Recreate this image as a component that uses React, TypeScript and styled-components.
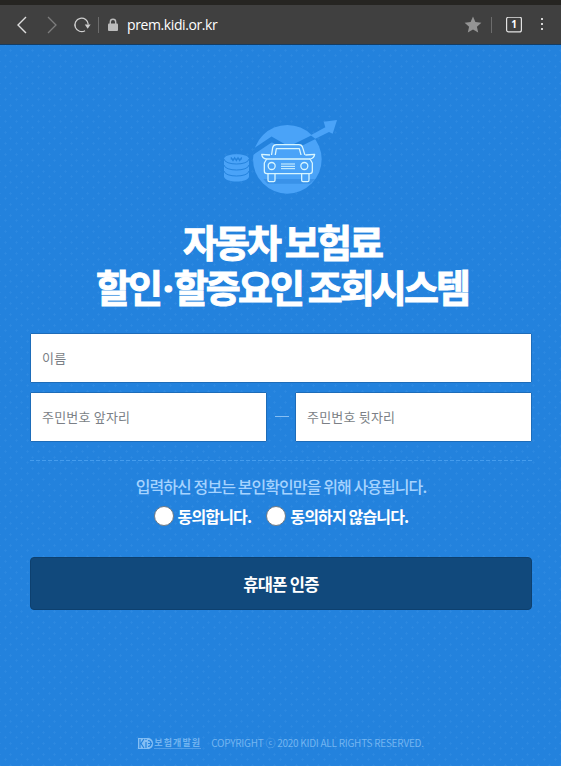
import React from "react";
import styled, { createGlobalStyle } from "styled-components";

const GlobalStyle = createGlobalStyle`
  * { box-sizing: border-box; }
  body { margin: 0; background: #2382dd; }
  input, button { font-family: inherit; }
`;

const Page = styled.div`
  height: 766px;
  display: flex;
  flex-direction: column;
  overflow: hidden;
  font-family: "Noto Sans CJK KR", "Noto Sans", sans-serif;
`;

const BrowserBar = styled.header`
  height: 45px;
  flex: none;
  display: flex;
  align-items: center;
  border-top: 5px solid #262522;
  border-bottom: 1px solid #143c63;
  background: #404040;
  padding: 0 16px 0 12px;
`;

const ToolIcon = styled.svg<{ $left?: number }>`
  display: block;
  flex: none;
  margin-left: ${(p) => p.$left ?? 0}px;
`;

const Separator = styled.span<{ $left: number }>`
  width: 1px;
  height: 16px;
  margin-left: ${(p) => p.$left}px;
  background: #6c6c6c;
`;

const Address = styled.span`
  flex: 1;
  margin-left: 9px;
  color: #fff;
  font: 14px/20px "Open Sans", "Noto Sans", sans-serif;
  letter-spacing: -0.4px;
`;

const Main = styled.main`
  flex: 1;
  display: flex;
  flex-direction: column;
  align-items: center;
  padding: 60px 29px 0 30px;
  background-color: #2382dd;
  background-image:
    radial-gradient(circle at 5.5px 5.5px, #2d89e0 0.8px, transparent 1.4px),
    radial-gradient(circle at 5.5px 5.5px, #2d89e0 0.8px, transparent 1.4px);
  background-size: 11px 11px;
  background-position: 5px 0, 0 5px;
`;

const Hero = styled.svg`
  display: block;
  flex: none;
  width: 140px;
  height: 100px;
  margin-right: 2px;
`;

const Title = styled.h1`
  margin: 13px 0 0;
  padding-left: 2px;
  color: #fff;
  font-size: 38px;
  font-weight: 700;
  line-height: 45px;
  text-align: center;
  white-space: nowrap;
  letter-spacing: -2.9px;
  -webkit-text-stroke: 1px #fff;
`;

const TitleLine = styled.span`
  display: block;
`;

const MiddleDot = styled.span`
  margin-left: 3px;
  font-family: "Noto Sans", sans-serif;
  line-height: 0;
  letter-spacing: 0;
`;

const Form = styled.form`
  align-self: stretch;
  margin-top: 25px;
`;

const Field = styled.input`
  display: block;
  width: 100%;
  min-width: 0;
  height: 50px;
  border: 1px solid #1d6cb9;
  border-radius: 1px;
  background: #fff;
  padding: 0 10px 2px 11px;
  font-size: 13px;
  letter-spacing: 0.2px;
  &::placeholder { color: #7b7f86; opacity: 1; }
`;

const IdRow = styled.div`
  display: grid;
  grid-template-columns: 1fr 14px 1fr;
  column-gap: 7px;
  align-items: center;
  margin-top: 9px;
`;

const Dash = styled.span`
  height: 1px;
  margin: 0 -1px 2px 1px;
  background: #86bff4;
`;

const Consent = styled.section`
  margin-top: 18px;
  text-align: center;
`;

const Rule = styled.svg`
  display: block;
  width: 100%;
  height: 1px;
`;

const Notice = styled.p`
  margin: 13px 0 0;
  color: #a5d3ff;
  font-size: 16px;
  font-weight: 500;
  line-height: 24px;
  letter-spacing: -0.92px;
`;

const Choices = styled.div`
  display: flex;
  justify-content: center;
  gap: 15px;
  margin-top: 6px;
`;

const Choice = styled.label`
  display: flex;
  align-items: center;
  gap: 4px;
  height: 24px;
  color: #fff;
  font-size: 16px;
  font-weight: 700;
  letter-spacing: -0.85px;
`;

const Radio = styled.input`
  appearance: none;
  width: 20px;
  height: 20px;
  margin: 0;
  border: 1px solid #727b84;
  border-radius: 50%;
  background: #fff;
`;

const Submit = styled.button`
  display: block;
  width: 100%;
  height: 53px;
  margin-top: 29px;
  padding-bottom: 1px;
  border: 1px solid #0d406f;
  border-radius: 4px;
  background: #11497c;
  color: #fff;
  font-size: 16.5px;
  font-weight: 700;
  letter-spacing: -0.7px;
`;

const Footer = styled.footer`
  display: flex;
  align-items: center;
  gap: 10px;
  height: 16px;
  margin: auto 0 15px;
  color: #73b5f1;
`;

const Brand = styled.div`
  display: flex;
  align-items: center;
  gap: 1px;
`;

const BrandText = styled.div`
  display: flex;
  flex-direction: column;
`;

const BrandName = styled.span`
  font-size: 9px;
  line-height: 9px;
  font-weight: 700;
  letter-spacing: 1.1px;
  white-space: nowrap;
`;

const BrandRule = styled.span`
  height: 1px;
  margin-top: 1px;
  background: #529fe9;
`;

const Copyright = styled.span`
  font-size: 10px;
  line-height: 16px;
  letter-spacing: -0.25px;
  white-space: nowrap;
`;

function HeroArt() {
  const light = "#4aa3f8";
  const base = "#2382dd";
  return (
    <Hero viewBox="0 0 420 300" aria-hidden="true">
      <defs>
        <clipPath id="disc"><circle cx="232" cy="163" r="104" /></clipPath>
      </defs>
      <circle cx="232" cy="163" r="103" fill={light} />
      <g clipPath="url(#disc)">
        <path d="M120 147 185 103 237 133 325 89" fill="none" stroke={base} strokeWidth="15" />
        <path d="M160 222H316L300 236H172Z" fill="#3992e9" />
      </g>
      <path d="M302 91 316 101 357 81 368 86 381 45 341 50 346 67Z" fill={light} />
      <path d="M42 162v52c0 21 75 21 75 0v-52c0-19-75-19-75 0Z" fill={light} />
      <path d="M42 162c2 20 73 20 75 0M42 180c2 20 73 20 75 0M42 198c2 20 73 20 75 0" fill="none" stroke={base} strokeWidth="3" />
      <path d="M63 157l6 10 5-9 5 9 5-9 5 9 6-10M62 162h34" fill="none" stroke={base} strokeWidth="3.5" />
      <g fill={light} stroke="#d8f6ff" strokeWidth="3.8" strokeLinejoin="round">
        <path d="M174 202v24q0 4 4 4h13q4 0 4-4v-20M275 206v20q0 4 4 4h14q4 0 4-4v-24" />
        <path d="M183 161 188 128Q190 119 199 119H267Q276 119 278 128L288 161" />
        <path d="M194 161 199 131H268L276 161" fill="none" />
        <path d="M180 150 155 148Q157 161 170 162L163 174V198Q163 206 171 206H299Q307 206 307 198V174L300 162Q312 160 314 148L286 150" />
        <path d="M170 162H300" fill="none" />
        <circle cx="185" cy="183" r="10.5" />
        <circle cx="283" cy="183" r="10.5" />
        <path d="M213 177H255M213 184H255M213 191H255" strokeWidth="3" />
      </g>
    </Hero>
  );
}

export default function App() {
  return (
    <Page>
      <GlobalStyle />
      <BrowserBar>
        <ToolIcon width="20" height="20" viewBox="0 0 20 20" fill="none" stroke="#dedede" strokeWidth="1.4">
          <path d="M14 2 6 10l8 8" />
        </ToolIcon>
        <ToolIcon $left={10} width="20" height="20" viewBox="0 0 20 20" fill="none" stroke="#7d7d7d" strokeWidth="1.3">
          <path d="M6 2l8 8-8 8" />
        </ToolIcon>
        <ToolIcon $left={11} width="20" height="20" viewBox="0 0 20 20" fill="none" stroke="#cfcfcf" strokeWidth="1.3">
          <path d="M12 15.7A6.7 6.7 0 1 1 15.3 9.5" />
          <path d="M11.8 9.5H17.6L14.7 13.7Z" fill="#cfcfcf" stroke="none" />
        </ToolIcon>
        <Separator $left={5} />
        <ToolIcon $left={9} width="10" height="14" viewBox="0 0 10 14">
          <path d="M2.3 6V4a2.7 2.7 0 0 1 5.4 0v2" fill="none" stroke="#bcbcbc" strokeWidth="1.4" />
          <rect x="0" y="5.5" width="10" height="7.5" rx="1" fill="#bcbcbc" />
        </ToolIcon>
        <Address>prem.kidi.or.kr</Address>
        <ToolIcon width="18" height="18" viewBox="0 0 18 18">
          <path d="m9 .5 2.4 5.6 6 .6-4.5 4L14.2 16.6 9 13.5 3.8 16.6l1.3-5.9L.6 6.7l6-.6Z" fill="#949494" />
        </ToolIcon>
        <Separator $left={9} />
        <ToolIcon $left={14} width="16" height="16" viewBox="0 0 16 16">
          <rect x=".6" y=".1" width="14.8" height="14.8" rx="2" fill="none" stroke="#e2e2e2" strokeWidth="1.2" />
          <text x="8" y="11" textAnchor="middle" fill="#fff" fontFamily="Open Sans" fontSize="10" fontWeight="700">1</text>
        </ToolIcon>
        <ToolIcon $left={19} width="4" height="16" viewBox="0 0 4 16" fill="#d5d5d5">
          <path d="M0 1h2v2H0zM0 6h2v2H0zM0 11h2v2H0z" />
        </ToolIcon>
      </BrowserBar>
      <Main>
        <HeroArt />
        <Title>
          <TitleLine>자동차 보험료</TitleLine>
          <TitleLine>할인<MiddleDot>·</MiddleDot>할증요인 조회시스템</TitleLine>
        </Title>
        <Form onSubmit={(e) => e.preventDefault()}>
          <Field placeholder="이름" />
          <IdRow>
            <Field placeholder="주민번호 앞자리" />
            <Dash />
            <Field placeholder="주민번호 뒷자리" />
          </IdRow>
          <Consent>
            <Rule><line x1="0" x2="502" y1=".5" y2=".5" stroke="#459ced" strokeDasharray="4 2" /></Rule>
            <Notice>입력하신 정보는 본인확인만을 위해 사용됩니다.</Notice>
            <Choices>
              <Choice><Radio type="radio" name="agree" />동의합니다.</Choice>
              <Choice><Radio type="radio" name="agree" />동의하지 않습니다.</Choice>
            </Choices>
          </Consent>
          <Submit type="submit">휴대폰 인증</Submit>
        </Form>
        <Footer>
          <Brand>
            <svg width="15" height="11" viewBox="0 0 15 11" aria-hidden="true">
              <path d="M0 0h11q4 1 4 5.5T11 11H0Z" fill="#83bef4" />
              <path d="M2 1v9M6 1 3 5.5 6 10M8 4v6M8 1v1M10 5.5h4M10 2.5q3 0 3 3t-3 3" fill="none" stroke="#2382dd" strokeWidth="1.2" />
            </svg>
            <BrandText>
              <BrandName>보험개발원</BrandName>
              <BrandRule />
            </BrandText>
          </Brand>
          <Copyright>COPYRIGHT ⓒ 2020 KIDI ALL RIGHTS RESERVED.</Copyright>
        </Footer>
      </Main>
    </Page>
  );
}
